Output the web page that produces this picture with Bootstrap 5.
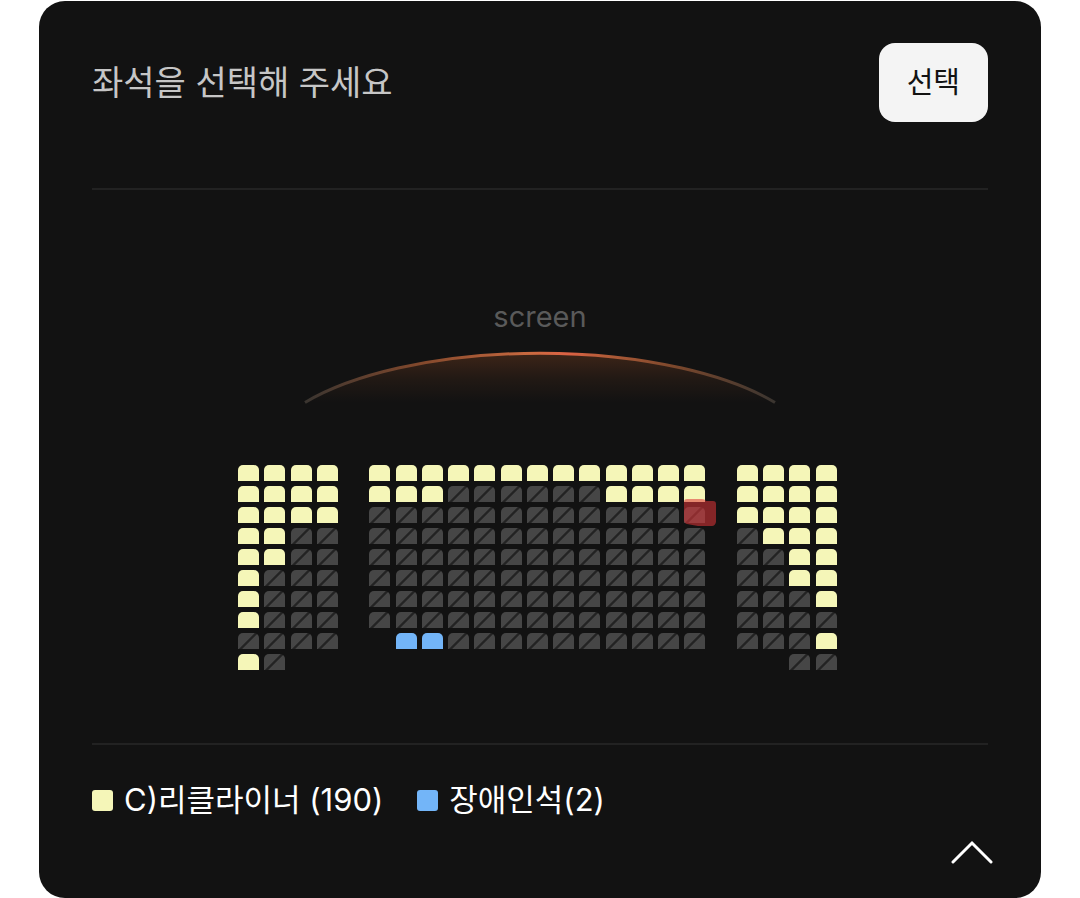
<!DOCTYPE html>
<html lang="ko">
<head>
<meta charset="utf-8">
<meta name="viewport" content="width=device-width, initial-scale=1">
<title>좌석 선택</title>
<link href="https://cdn.jsdelivr.net/npm/bootstrap@5.3.0/dist/css/bootstrap.min.css" rel="stylesheet">
<style>
  body { background: #fff; font-family: Inter, "Noto Sans CJK KR", sans-serif; }
  .page-wrap { padding: 1px 39px 0; }
  .seat-panel { background: #121212; border-radius: 26px; padding: 42px 53px 32px; color: #fff; }
  .panel-title { font-size: 34px; line-height: 40px; font-weight: 400; color: #c6c6c6; }
  .btn-pick, .btn-pick:hover { background: #f4f4f4; color: #121212; font-size: 29px; line-height: 39px; padding: 20px 28px; border: 0; border-radius: 16px; }
  .rule { height: 2px; background: #222; }
  .panel-head { margin-bottom: 66px; }
  .hall { padding: 107px 0 73px; }
  .screen-label { font-size: 29px; line-height: 40px; color: #5a5a5a; }
  .screen-arc { width: 470px; max-width: 100%; margin: 15px 0 53px; overflow: visible; }
  .seat-grid { display: grid; grid-template-columns: repeat(23, 1fr); gap: 5px; width: 604px; max-width: 100%; padding-right: 5px; }
  .seat { appearance: none; display: block; width: 100%; max-width: 21px; height: 16px; margin: 0; border-radius: 5px 5px 0 0; background: #f5f6b8; }
  .seat-access { background: #73b5f8; }
  .seat:disabled { background: #464646 linear-gradient(135deg, transparent 44%, #232323 47%, #232323 53%, transparent 56%); }
  .seat:checked { outline: 2px solid #e8663c; }
  .hold-mark { position: absolute; left: 0; top: -8px; width: 32px; height: 27px; pointer-events: none; }
  .legend-row { padding-top: 35px; gap: 34px; font-size: 31px; line-height: 40px; }
  .legend-item { gap: 11px; }
  .swatch { width: 21px; height: 21px; border-radius: 3px; background: #f5f6b8; }
  .swatch.seat-access { background: #73b5f8; }
  .btn-fold { margin: 20px -5px 0 0; width: 42px; height: 26px; }
</style>
</head>
<body>
<main class="page-wrap">
  <section class="seat-panel">
    <header class="panel-head d-flex justify-content-between align-items-center">
      <h1 class="panel-title mb-0">좌석을 선택해 주세요</h1>
      <button type="button" class="btn btn-pick">선택</button>
    </header>
    <div class="rule"></div>
    <div class="hall d-flex flex-column align-items-center">
      <div class="screen-label">screen</div>
      <svg class="screen-arc" viewBox="0 0 470 60" aria-hidden="true">
        <defs>
          <linearGradient id="edge" gradientUnits="userSpaceOnUse" x1="0" y1="0" x2="470" y2="0">
            <stop offset="0" stop-color="#3a3530"/>
            <stop offset=".25" stop-color="#84492c"/>
            <stop offset=".48" stop-color="#ca6a40"/>
            <stop offset=".56" stop-color="#dc6244"/>
            <stop offset=".64" stop-color="#b25c38"/>
            <stop offset=".78" stop-color="#7d482c"/>
            <stop offset="1" stop-color="#3a3530"/>
          </linearGradient>
          <linearGradient id="glow" x1="0" y1="0" x2="0" y2="1">
            <stop offset="0" stop-color="#ff7a32" stop-opacity=".18"/>
            <stop offset=".5" stop-color="#ff7a32" stop-opacity=".07"/>
            <stop offset="1" stop-color="#ff7a32" stop-opacity="0"/>
          </linearGradient>
        </defs>
        <path d="M0 50.500A280 108 0 0 1 470 50.500Z" fill="url(#glow)"/>
        <path d="M0 50.500A280 108 0 0 1 470 50.500" fill="none" stroke="url(#edge)" stroke-width="3"/>
      </svg>
      <div class="seat-grid" id="seats" role="group" aria-label="좌석 배치"></div>
    </div>
    <div class="rule"></div>
    <div class="legend-row d-flex flex-wrap">
      <div class="legend-item d-flex align-items-center"><span class="swatch"></span><span>C)리클라이너 (190)</span></div>
      <div class="legend-item d-flex align-items-center"><span class="swatch seat-access"></span><span>장애인석(2)</span></div>
    </div>
    <div class="d-flex justify-content-end">
      <button type="button" class="btn btn-fold border-0 p-0 d-flex" aria-label="접기">
        <svg width="42" height="26" viewBox="0 0 42 26" fill="none" stroke="#fff" stroke-width="3" stroke-linecap="round" stroke-linejoin="miter"><path d="M2 22 21 3 40 22"/></svg>
      </button>
    </div>
  </section>
</main>
<script>
  // o = open, x = taken, w = wheelchair, h = taken with hold marker, . = no seat
  const rows = [
    'oooo.ooooooooooooo.oooo',
    'oooo.oooxxxxxxoooo.oooo',
    'oooo.xxxxxxxxxxxxh.oooo',
    'ooxx.xxxxxxxxxxxxx.xooo',
    'ooxx.xxxxxxxxxxxxx.xxoo',
    'oxxx.xxxxxxxxxxxxx.xxoo',
    'oxxx.xxxxxxxxxxxxx.xxxo',
    'oxxx.xxxxxxxxxxxxx.xxxx',
    'xxxx..wwxxxxxxxxxx.xxxo',
    'ox...................xx'
  ];
  const mark = '<svg class="hold-mark" viewBox="0 0 32 27" aria-hidden="true"><path d="M3 0H18Q21 0 22 2H29Q32 2 32 5V23Q31 27 28 27H14L3 25Q0 24 0 21V3Q0 0 3 0Z" fill="#dc3438" fill-opacity=".57"/></svg>';
  document.getElementById('seats').innerHTML = rows.map((row, r) => [...row].map((s, c) => {
    if (s === '.') return '<span></span>';
    const taken = s === 'x' || s === 'h';
    return '<div class="position-relative"><input type="checkbox" class="seat' + (s === 'w' ? ' seat-access' : '') +
      '" aria-label="' + String.fromCharCode(65 + r) + '열 ' + (c + 1) + '번"' + (taken ? ' disabled' : '') + '>' +
      (s === 'h' ? mark : '') + '</div>';
  }).join('')).join('');
</script>
<script src="https://cdn.jsdelivr.net/npm/bootstrap@5.3.0/dist/js/bootstrap.bundle.min.js"></script>
</body>
</html>
